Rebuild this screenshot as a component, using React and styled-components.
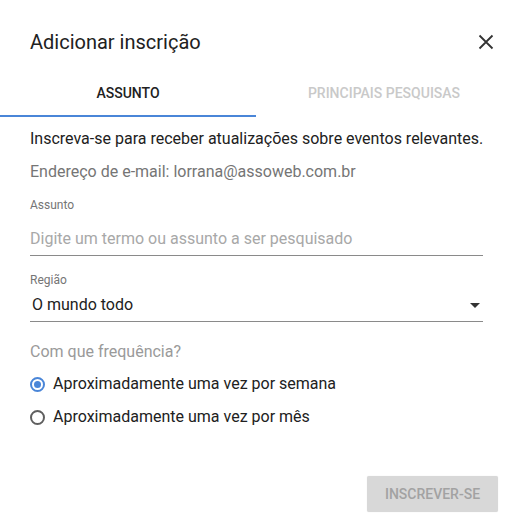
import React, { useState } from "react";
import styled, { createGlobalStyle } from "styled-components";

const GlobalStyle = createGlobalStyle`
  html, body { margin: 0; padding: 0; background: #ffffff; }
  body { font-family: Roboto, "Noto Sans", Arial, sans-serif; -webkit-font-smoothing: antialiased; }
  * { box-sizing: border-box; }
`;

const Dialog = styled.div`
  width: 509px;
  height: 525px;
  background: #ffffff;
  display: flex;
  flex-direction: column;
  overflow: hidden;
`;

const Header = styled.div`
  display: flex;
  align-items: center;
  justify-content: space-between;
  padding: 30px 11px 0 30px;
  height: 54px;
`;

const Title = styled.h2`
  margin: 0;
  font-size: 20px;
  font-weight: 400;
  line-height: 24px;
  color: #212121;
`;

const CloseButton = styled.button`
  width: 24px;
  height: 24px;
  padding: 0;
  border: 0;
  background: transparent;
  display: flex;
  align-items: center;
  justify-content: center;
  cursor: pointer;
`;

const Tabs = styled.div`
  display: flex;
  margin-top: 15px;
  height: 48px;
  width: 512px;
`;

const Tab = styled.div`
  flex: 1;
  display: flex;
  align-items: center;
  justify-content: center;
  font-size: 14px;
  font-weight: 500;
  text-transform: uppercase;
  color: ${(p) => (p.$active ? "#212121" : "#c9c9c9")};
  border-bottom: 2px solid ${(p) => (p.$active ? "#4a86d8" : "transparent")};
  padding-top: 2px;
`;

const Content = styled.div`
  padding: 0 26px 0 30px;
  display: flex;
  flex-direction: column;
`;

const Lead = styled.p`
  margin: 10px 0 0;
  font-size: 16px;
  line-height: 24px;
  color: #212121;
  white-space: nowrap;
`;

const Email = styled.p`
  margin: 9px 0 0;
  font-size: 16px;
  line-height: 24px;
  color: #757575;
`;

const Field = styled.div`
  display: flex;
  flex-direction: column;
  margin-top: ${(p) => p.$top}px;
`;

const Label = styled.label`
  font-size: 12px;
  line-height: 16px;
  color: #757575;
`;

const Input = styled.input`
  margin-top: 14px;
  border: 0;
  border-bottom: 1px solid #8a8a8a;
  padding: 0 0 4px;
  font-family: inherit;
  font-size: 16px;
  line-height: 24px;
  color: #212121;
  outline: none;
  background: transparent;
  &::placeholder { color: #a8a8a8; }
`;

const Select = styled.div`
  margin-top: 5px;
  display: flex;
  align-items: center;
  justify-content: space-between;
  border-bottom: 1px solid #8a8a8a;
  padding: 0 3px 4px 2px;
  font-size: 16px;
  line-height: 24px;
  color: #212121;
`;

const Question = styled.div`
  margin-top: 18px;
  font-size: 16px;
  line-height: 24px;
  color: #9a9a9a;
`;

const RadioGroup = styled.div`
  display: flex;
  flex-direction: column;
  gap: 9px;
  margin-top: 8px;
`;

const RadioRow = styled.label`
  display: flex;
  align-items: center;
  gap: 8px;
  font-size: 16px;
  line-height: 24px;
  color: #212121;
  cursor: pointer;
`;

const RadioCircle = styled.span`
  width: 15px;
  height: 15px;
  border-radius: 50%;
  border: 2px solid ${(p) => (p.$checked ? "#4a86d8" : "#5f5f5f")};
  display: flex;
  align-items: center;
  justify-content: center;
  flex: none;
  &::after {
    content: "";
    width: 7px;
    height: 7px;
    border-radius: 50%;
    background: ${(p) => (p.$checked ? "#4a86d8" : "transparent")};
  }
`;

const Footer = styled.div`
  margin-top: auto;
  display: flex;
  justify-content: flex-end;
  padding: 0 11px 13px 0;
`;

const SubmitButton = styled.button`
  width: 131px;
  height: 36px;
  border: 0;
  border-radius: 2px;
  background: #d8d8d8;
  color: #a2a2a2;
  font-family: inherit;
  font-size: 14px;
  font-weight: 500;
  text-transform: uppercase;
  box-shadow: 0 0 1px rgba(0,0,0,0.15);
`;

export default function App() {
  const [freq, setFreq] = useState("semana");
  return (
    <>
      <GlobalStyle />
      <Dialog>
        <Header>
          <Title>Adicionar inscrição</Title>
          <CloseButton aria-label="Fechar">
            <svg width="24" height="24" viewBox="0 0 24 24">
              <path d="M5.5 5.5 L18.5 18.5 M18.5 5.5 L5.5 18.5" stroke="#333" strokeWidth="1.8" fill="none" />
            </svg>
          </CloseButton>
        </Header>
        <Tabs>
          <Tab $active>Assunto</Tab>
          <Tab>Principais pesquisas</Tab>
        </Tabs>
        <Content>
          <Lead>Inscreva-se para receber atualizações sobre eventos relevantes.</Lead>
          <Email>Endereço de e-mail: lorrana@assoweb.com.br</Email>
          <Field $top={13}>
            <Label>Assunto</Label>
            <Input placeholder="Digite um termo ou assunto a ser pesquisado" />
          </Field>
          <Field $top={16}>
            <Label>Região</Label>
            <Select>
              <span>O mundo todo</span>
              <svg width="10" height="5" viewBox="0 0 10 5">
                <path d="M0 0 L10 0 L5 5 Z" fill="#333" />
              </svg>
            </Select>
          </Field>
          <Question>Com que frequência?</Question>
          <RadioGroup>
            <RadioRow onClick={() => setFreq("semana")}>
              <RadioCircle $checked={freq === "semana"} />
              Aproximadamente uma vez por semana
            </RadioRow>
            <RadioRow onClick={() => setFreq("mes")}>
              <RadioCircle $checked={freq === "mes"} />
              Aproximadamente uma vez por mês
            </RadioRow>
          </RadioGroup>
        </Content>
        <Footer>
          <SubmitButton disabled>Inscrever-se</SubmitButton>
        </Footer>
      </Dialog>
    </>
  );
}
